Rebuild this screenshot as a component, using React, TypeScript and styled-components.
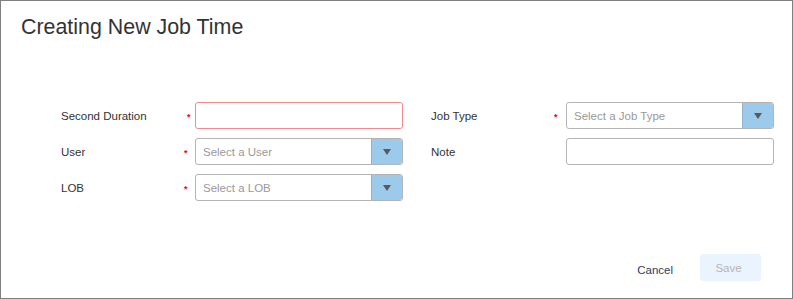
import * as React from 'react';
import styled, {createGlobalStyle} from 'styled-components';

const GlobalStyle = createGlobalStyle`
  body {
    margin: 0;
    font-family: "Liberation Sans", Arial, sans-serif;
    background: #fff;
  }
`;

const Dialog = styled.div`
  box-sizing: border-box;
  width: 793px;
  height: 299px;
  border: 1px solid #7f7f7f;
  display: flex;
  flex-direction: column;
  background: #fff;
`;

const Title = styled.h2`
  margin: 0;
  padding: 14px 0 0 20px;
  font-size: 21.4px;
  font-weight: normal;
  line-height: 24px;
  color: #333;
`;

const Form = styled.div`
  display: flex;
  gap: 28px;
  padding: 63px 0 0 60px;
`;

const Column = styled.div`
  display: flex;
  flex-direction: column;
  gap: 9px;
`;

const Field = styled.div<{$labelArea: number; $starAt: number}>`
  display: grid;
  grid-template-columns: ${p => p.$starAt}px ${p => p.$labelArea - p.$starAt}px 208px;
  align-items: center;
  height: 27px;
  font-size: 11.5px;
  color: #333;
`;

const Required = styled.span`
  color: #f00;
  font-size: 9px;
  font-weight: bold;
  line-height: 1;
  margin-top: 3px;
`;

const TextInput = styled.div<{$invalid?: boolean}>`
  box-sizing: border-box;
  height: 27px;
  border: 1px solid ${p => (p.$invalid ? '#f08a8f' : '#b4b4b4')};
  border-radius: 3px;
  background: #fff;
`;

const Select = styled.div`
  box-sizing: border-box;
  height: 27px;
  border: 1px solid #b4b4b4;
  border-radius: 3px;
  display: flex;
  overflow: hidden;
`;

const Placeholder = styled.span`
  flex: 1;
  padding-left: 7px;
  font-size: 11.5px;
  color: #999;
  line-height: 27px;
`;

const Toggle = styled.span`
  width: 30px;
  background: #9ccaea;
  border-left: 1px solid #8fb3cd;
  display: flex;
  align-items: center;
  justify-content: center;
`;

const Caret = styled.span`
  width: 0;
  height: 0;
  border-left: 4.5px solid transparent;
  border-right: 4.5px solid transparent;
  border-top: 6px solid #5a5a5a;
  margin-top: 1px;
`;

const Footer = styled.div`
  margin-top: auto;
  display: flex;
  justify-content: flex-end;
  align-items: center;
  gap: 27px;
  padding: 0 31px 17px 0;
`;

const CancelButton = styled.button`
  border: none;
  background: none;
  padding: 0;
  font: inherit;
  font-size: 11.5px;
  color: #333a5a;
  margin-top: 4px;
`;

const SaveButton = styled.button`
  width: 61px;
  height: 27px;
  border: none;
  border-radius: 3px;
  background: #eaf4fe;
  color: #b5b5b5;
  font: inherit;
  font-size: 11.5px;
  padding: 0 4px 0 0;
`;

const SelectBox: React.FC<{placeholder: string}> = ({placeholder}) => (
  <Select>
    <Placeholder>{placeholder}</Placeholder>
    <Toggle>
      <Caret />
    </Toggle>
  </Select>
);

export default function App() {
  return (
    <Dialog>
      <GlobalStyle />
      <Title>Creating New Job Time</Title>
      <Form>
        <Column>
          <Field $labelArea={134} $starAt={126}>
            <span>Second Duration</span>
            <Required>*</Required>
            <TextInput $invalid />
          </Field>
          <Field $labelArea={134} $starAt={123}>
            <span>User</span>
            <Required>*</Required>
            <SelectBox placeholder="Select a User" />
          </Field>
          <Field $labelArea={134} $starAt={123}>
            <span>LOB</span>
            <Required>*</Required>
            <SelectBox placeholder="Select a LOB" />
          </Field>
        </Column>
        <Column>
          <Field $labelArea={135} $starAt={123}>
            <span>Job Type</span>
            <Required>*</Required>
            <SelectBox placeholder="Select a Job Type" />
          </Field>
          <Field $labelArea={135} $starAt={123}>
            <span>Note</span>
            <span />
            <TextInput />
          </Field>
        </Column>
      </Form>
      <Footer>
        <CancelButton>Cancel</CancelButton>
        <SaveButton disabled>Save</SaveButton>
      </Footer>
    </Dialog>
  );
}
